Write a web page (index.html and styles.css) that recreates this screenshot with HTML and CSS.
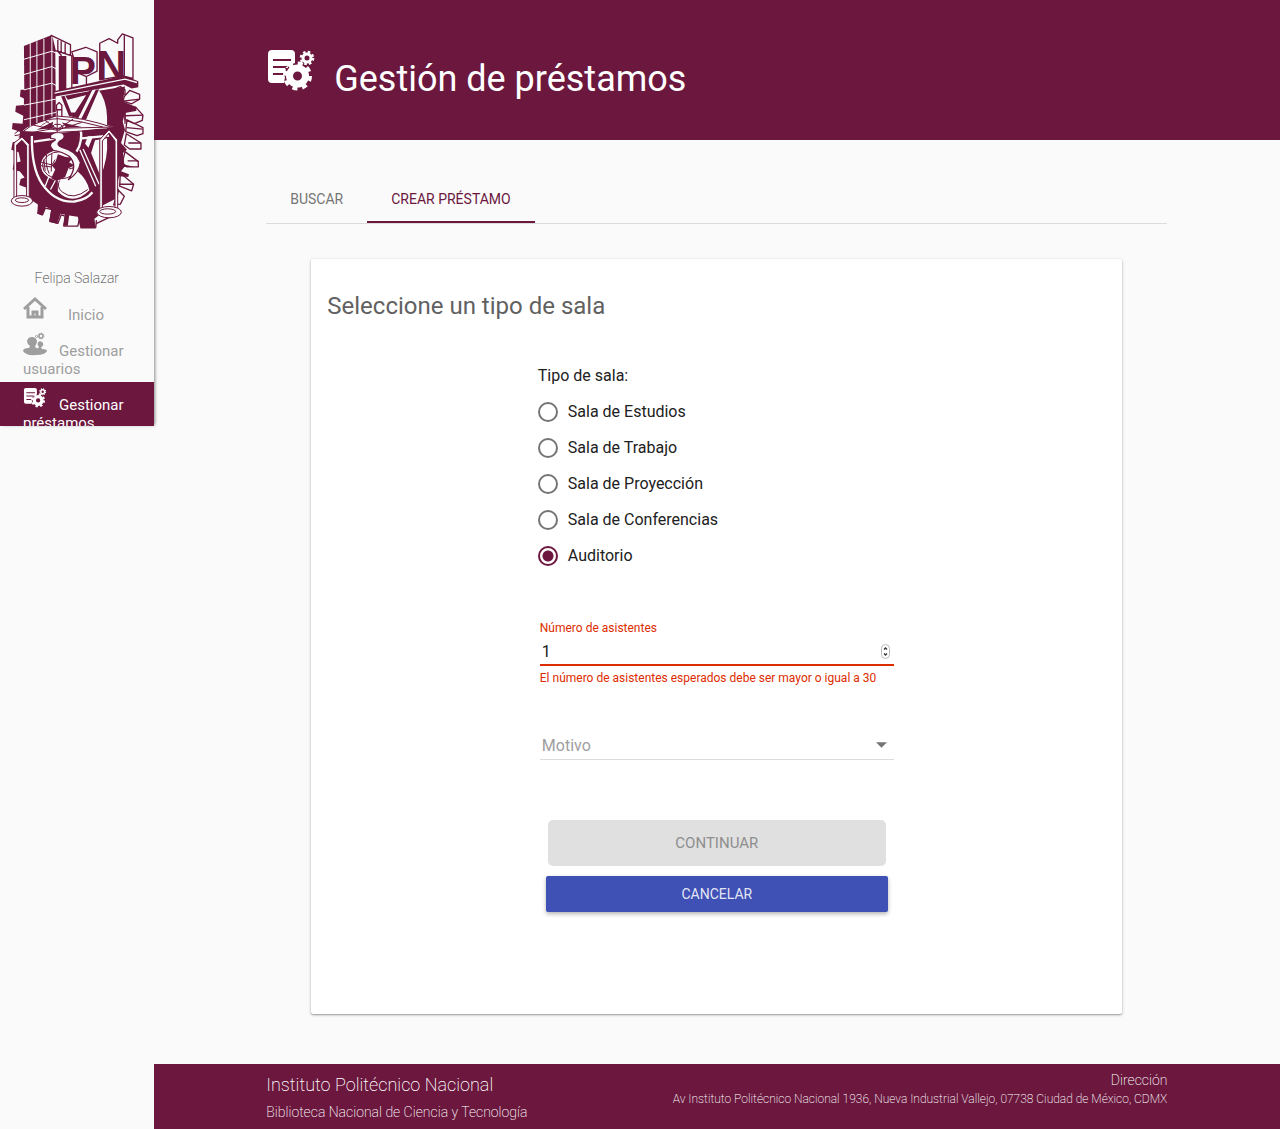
FILE: index.html
```html
<!DOCTYPE html>
<html lang="es">
<head>
<meta charset="utf-8">
<meta name="viewport" content="width=device-width, initial-scale=1">
<title>Gestión de préstamos</title>
<link rel="stylesheet" href="styles.css">
</head>
<body>
<svg class="defs" width="0" height="0" aria-hidden="true">
  <defs>
    <symbol id="loans" viewBox="-2 0 50 42">
      <path fill-rule="evenodd" fill="currentColor" d="M4 0H23Q27 0 27 4V13L20 16L17 18L18 20L15 24L17 27L16 33H4Q0 33 0 29V4Q0 0 4 0ZM5 9H23V11H5ZM5 16H20V18H5ZM5 23H16V25H5Z"/>
      <g fill="none" stroke="currentColor">
        <circle cx="29.500" cy="26" r="8" stroke-width="7"/>
        <circle cx="29.500" cy="26" r="12.500" stroke-width="4" stroke-dasharray="5 4.800"/>
        <circle cx="39" cy="8" r="4" stroke-width="3"/>
        <circle cx="39" cy="8" r="6.200" stroke-width="2.200" stroke-dasharray="2.600 2.270"/>
      </g>
    </symbol>
  </defs>
</svg>
<div class="shell">
  <aside class="sidebar">
    <svg class="logo" viewBox="-24 -30 462 660" role="img" aria-label="Escudo del IPN">
      <!-- gear teeth in relief -->
      <g class="face">
        <path d="M320 178L338 170L352 180V192L338 196ZM350 200L366 182L396 194V208L372 222L346 214ZM352 236L384 232L406 256L404 272L380 282L352 270ZM358 270L406 294V312L388 318L354 306ZM356 312L400 340V358H366L350 346ZM352 366L392 396V412H358L344 400ZM338 430L378 464L372 484L336 470ZM332 482L350 500L338 524L318 526ZM316 540L332 552L300 566L262 584"/>
        <path d="M346 214L396 208M352 258L406 256M358 294L404 298M362 340H400M360 394H392M336 464H378M352 250V282M384 232V244"/>
        <path d="M88 550L104 556L112 536L132 540L126 576L150 582L160 556L172 560L168 590H210L216 564L222 594H264L266 572"/>
      </g>
      <path class="ink" d="M48 180H38L36 200L48 206V226L24 228L22 246L46 258L44 282L14 280L12 298L36 306L34 334L14 338L10 360L32 368L38 396L18 400L14 420L36 426L50 444L38 448L34 466L60 476V505L90 525L88 552L102 558L114 532L130 540L124 577L148 583L158 553L172 556L166 589H180L184 558L210 562L218 597H264L260 568L284 550L280 530L330 505L334 480L326 474L334 440L362 442L364 434L340 425L350 412H380L350 405L346 370L358 360L340 340L352 300L345 275L352 250L384 244L386 232L346 215L352 170L278 182L200 190L170 280L130 255Z"/>
      <!-- monument support -->
      <path class="paper" d="M138 196L270 176Q296 208 298 262V300L150 290L134 250Z"/>
      <path class="ink" d="M244 182L254 180L206 276H184ZM264 180L274 178L232 276H216ZM160 200L170 198L190 248H208L200 260H184ZM172 198L244 184L242 194L180 210Z"/>
      <path class="paper-line" d="M256 182L212 274"/>
      <path class="face" d="M146 226L154 218L162 226V240H146ZM148 240H162V264H148Z"/>
      <!-- shield interior -->
      <path class="ink" d="M70 316L140 300L310 296L326 480L270 540L110 526L72 440Z"/>
      <path class="paper" d="M262 332L298 326Q302 390 278 440L250 370ZM240 320H256L242 354L232 342ZM150 450L210 426Q238 450 245 482Q195 532 150 486Z"/>
      <path class="ink" d="M188 270Q220 284 221 316Q221 340 208 360L192 348Q206 310 176 282Z"/>
      <g class="paper-line thick">
        <path d="M72 318Q70 414 102 462Q142 520 200 516Q238 510 254 488M196 270Q226 290 219 332Q216 352 206 366M222 326L304 318M78 336L146 326"/>
      </g>
      <g class="paper-line"><path d="M216 360L264 470M226 358L274 464M126 434L112 470M146 446L128 480"/></g>
      <path class="line" d="M158 448Q142 472 164 488Q196 514 240 480"/>
      <!-- globe and flask -->
      <ellipse class="paper" cx="157" cy="407" rx="58" ry="46"/>
      <g class="line">
        <ellipse cx="157" cy="407" rx="53" ry="41"/>
        <path d="M100 398L132 406L142 390M98 408L130 412M116 374Q112 408 124 432M132 372L130 426M108 390L112 424M202 378L196 418M210 390L204 422M190 408L216 398M184 418L214 410"/>
      </g>
      <path class="ink" d="M150 374L174 382L196 384L184 398L200 408L182 416L172 442L146 454L130 446L142 420L132 408L144 394Z"/>
      <path class="face" d="M128 316Q142 304 164 310Q178 324 156 334Q142 346 164 354Q206 364 218 398Q214 430 182 450Q212 408 184 380Q164 366 136 362Q118 346 138 334Q150 328 128 326Z"/>
      <!-- dome and balance beam -->
      <path class="paper" d="M44 304Q94 258 148 258Q232 264 318 292L158 310Z"/>
      <path class="ink" d="M86 300L136 276L132 296ZM162 278L222 292L176 294ZM106 282L134 268L94 292Z"/>
      <g class="line">
        <path d="M20 312Q82 258 148 259Q222 262 318 294M42 308Q92 266 150 267Q218 272 286 292M20 318L140 296L318 292M32 322L146 308L302 300M148 260V310M148 298L106 268M150 298L196 268M152 300L222 278M148 302L76 286M132 292L140 284H158L166 292L154 302Z"/>
      </g>
      <!-- scales -->
      <g class="face fine">
        <path d="M18 504V340L42 322L64 344V504H56V348L42 332L26 346V504ZM276 540V330L304 300L330 330V540H322V334L304 310L284 334V540Z"/>
        <ellipse cx="42" cy="514" rx="32" ry="16"/><ellipse cx="42" cy="512" rx="20" ry="7"/>
        <ellipse cx="304" cy="548" rx="37" ry="17"/><ellipse cx="300" cy="546" rx="24" ry="8"/>
      </g>
      <!-- tower -->
      <path class="ink" d="M48 48L130 16L142 30L144 260L50 296Z"/>
      <path class="face" d="M130 16L188 44V76L142 62L134 28ZM150 30V64M160 34V68M172 40V72"/>
      <path class="tower-grid" d="M67 40V290M87 34V280M108 26V272M132 20V260M48 88L132 64L146 70M48 134L132 110L146 118M48 180L132 160L146 168M48 226L144 208M48 270L144 248"/>
      <!-- monument lettering -->
      <g class="face">
        <path d="M150 64L192 78V176L160 184V76ZM236 140V164M192 66L234 52L268 66V124L236 140L212 130ZM276 40L304 26L330 40V30L344 12L376 24V146L344 138L276 150Z"/>
        <path d="M350 16V138"/>
      </g>
      <g class="letters"><text x="142" y="186" font-size="158">I</text><text x="186" y="162" font-size="118">P</text><text x="266" y="146" font-size="124">N</text></g>
      <path class="ink" d="M138 184L350 137L392 154V172L372 176L348 164L142 200Z"/>
      <path class="paper-line" d="M140 190L352 148L388 158"/>
    </svg>
    <p class="user">Felipa Salazar</p>
    <nav class="menu">
      <a href="#inicio"><svg class="icon icon-home" viewBox="0 0 24 24" aria-hidden="true"><path d="M1 13L12 3L23 13M5 11V21H19V11M10 21V16H14V21" fill="none" stroke="currentColor" stroke-width="3"/></svg>Inicio</a>
      <a href="#usuarios"><svg class="icon" viewBox="0 0 24 24" aria-hidden="true"><path fill="currentColor" d="M0 19Q0 16 6 16L7 14Q4 12 4 9Q5 5 9 5Q13 5 14 9Q14 12 12 14L13 16Q15 17 16 15Q14 13 15 10Q18 8 20 11Q21 14 18 15L19 17Q24 17 24 19Q22 23 13 23Q3 24 0 19Z"/><g fill="none" stroke="currentColor"><circle cx="18" cy="4" r="2" stroke-width="1.500"/><circle cx="18" cy="4" r="3" stroke-width="1" stroke-dasharray="1 1"/><circle cx="13.500" cy="4.500" r="1"/></g></svg>Gestionar usuarios</a>
      <a class="active" href="#prestamos"><svg class="icon" aria-hidden="true"><use href="#loans"/></svg>Gestionar préstamos</a>
    </nav>
  </aside>
  <div class="main">
    <header class="banner">
      <svg class="banner-icon" aria-hidden="true"><use href="#loans"/></svg>
      <h1>Gestión de préstamos</h1>
    </header>
    <main class="content">
      <nav class="tabs">
        <a href="#buscar">BUSCAR</a>
        <a class="selected" href="#crear">CREAR PRÉSTAMO</a>
      </nav>
      <section class="card">
        <h2>Seleccione un tipo de sala</h2>
        <form class="form">
          <fieldset class="rooms">
            <legend>Tipo de sala:</legend>
            <label><input type="radio" name="sala">Sala de Estudios</label>
            <label><input type="radio" name="sala">Sala de Trabajo</label>
            <label><input type="radio" name="sala">Sala de Proyección</label>
            <label><input type="radio" name="sala">Sala de Conferencias</label>
            <label><input type="radio" name="sala" checked>Auditorio</label>
          </fieldset>
          <div class="field invalid">
            <label for="asistentes">Número de asistentes</label>
            <div class="control">
              <input id="asistentes" type="number" value="1" aria-describedby="error">
              <svg class="stepper" viewBox="0 0 9 15" aria-hidden="true"><rect x=".5" y=".5" width="8" height="14" rx="4" fill="#fff" stroke="#bbb"/><path d="M3 5.500L4.500 4L6 5.500M3 9.500L4.500 11L6 9.500" fill="none" stroke="#333" stroke-width="1.300"/></svg>
            </div>
            <p id="error">El número de asistentes esperados debe ser mayor o igual a 30</p>
          </div>
          <div class="field">
            <div class="control">
              <select aria-label="Motivo"><option>Motivo</option></select>
              <svg class="arrow" viewBox="0 0 12 6" aria-hidden="true"><path d="M0 0H12L6 6Z" fill="#757575"/></svg>
            </div>
          </div>
          <div class="actions">
            <button class="continue" type="submit" disabled>CONTINUAR</button>
            <button class="cancel" type="button">CANCELAR</button>
          </div>
        </form>
      </section>
    </main>
    <footer class="footer">
      <div><p class="institute">Instituto Politécnico Nacional</p><p class="library">Biblioteca Nacional de Ciencia y Tecnología</p></div>
      <address><p class="place">Dirección</p><p class="street">Av Instituto Politécnico Nacional 1936, Nueva Industrial Vallejo, 07738 Ciudad de México, CDMX</p></address>
    </footer>
  </div>
</div>
</body>
</html>
```
FILE: styles.css
```css
:root { --wine: #6b173e; --error: #dd2c00; }
* { box-sizing: border-box; }
body { margin: 0; background: #fafafa; color: #212121; font: 16px/20px Roboto, sans-serif; }
h1, h2, p { margin: 0; font-weight: 400; }
a { text-decoration: none; }
.defs { position: absolute; }
.shell { display: grid; grid-template-columns: 12% minmax(0, 1fr); align-items: start; }

.sidebar { max-height: 426px; overflow: hidden; padding-top: 20px; background: #fafafa; box-shadow: 2px 0 3px -1px rgba(0, 0, 0, .45); }
.logo { display: block; width: 100%; }
.logo .ink { fill: var(--wine); }
.logo .paper { fill: #fafafa; }
.logo .line { fill: none; stroke: var(--wine); stroke-width: 3; }
.logo .face { fill: #fafafa; stroke: var(--wine); stroke-width: 4; stroke-linejoin: round; }
.logo .fine { stroke-width: 3; }
.logo .paper-line { fill: none; stroke: #fafafa; stroke-width: 4; }
.logo .thick { stroke-width: 7; }
.logo .tower-grid { fill: none; stroke: #fafafa; stroke-width: 3; }
.logo .letters { fill: var(--wine); font-family: "Liberation Sans", sans-serif; font-weight: 700; }
.user { margin: 29px 0 4px; color: #424242; text-align: center; font-size: 14px; font-weight: 200; }
.menu a { display: block; padding: 4px 23px; color: #9e9e9e; font-size: 15px; line-height: 18px; }
.menu .active { background: var(--wine); color: #fff; }
.icon { width: 24px; height: 24px; margin-right: 12px; vertical-align: baseline; }
.icon-home { margin-right: 21px; }

.banner { display: flex; align-items: flex-start; gap: 18px; height: 140px; padding: 50px 10% 0; background: var(--wine); color: #fff; }
.banner-icon { width: 50px; height: 42px; }
.banner h1 { font-size: 36px; line-height: 58px; }
.content { padding: 36px 10% 50px; }
.tabs { display: flex; height: 48px; border-bottom: 1px solid #dcdcdc; font-size: 14px; }
.tabs a { padding: 13px 24px; color: #757575; }
.tabs .selected { border-bottom: 2px solid var(--wine); color: var(--wine); }
.card { width: 90%; min-height: 755px; margin: 35px auto 0; padding: 30px 16px; border-radius: 2px; background: #fff; box-shadow: 0 1px 3px rgba(0, 0, 0, .3), 0 1px 1px rgba(0, 0, 0, .14); }
.card h2 { color: #616161; font-size: 24px; line-height: 35px; }
.form { width: 100%; max-width: 358px; margin: 42px auto 0; }
.rooms { display: grid; gap: 16px; margin: 0; padding: 0; border: 0; }
.rooms legend { padding: 0; margin-bottom: 16px; }
.rooms label { display: flex; align-items: center; gap: 10px; }
.rooms input { appearance: none; width: 20px; height: 20px; margin: 0; border: 2px solid #757575; border-radius: 50%; }
.rooms input:checked { border-color: var(--wine); background: radial-gradient(circle, var(--wine) 5px, transparent 6px); }
.field { margin: 54px 2px 0; font-size: 12px; line-height: 16px; }
.control { position: relative; }
.control input, .control select { display: block; width: 100%; height: 30px; padding: 4px 2px 2px; border: 0; border-bottom: 1px solid #dcdcdc; border-radius: 0; outline: 0; appearance: none; background: transparent; color: #9e9e9e; font: 16px/20px Roboto, sans-serif; }
.invalid { color: var(--error); }
.invalid .control input { border-bottom: 2px solid var(--error); color: #212121; appearance: textfield; }
.invalid p { padding-top: 4px; }
.field + .field { margin-top: 44px; }
.stepper { position: absolute; right: 4px; top: 8px; width: 9px; height: 15px; }
.arrow { position: absolute; right: 7px; top: 12px; width: 11px; height: 6px; }
.actions { display: grid; gap: 10px; margin: 60px 8px 0; }
.actions button { border: 0; font: 14px/20px Roboto, sans-serif; }
.actions .continue { height: 46px; margin: 0 2px; border-radius: 5px; background: #e0e0e0; color: #8e8e8e; font-size: 15px; }
.actions .cancel { height: 36px; border-radius: 2px; background: #3f51b5; color: rgba(255, 255, 255, .87); box-shadow: 0 2px 4px rgba(0, 0, 0, .3); }
.footer { display: flex; justify-content: space-between; min-height: 65px; padding: 6px 10% 0; background: var(--wine); color: #fff; }
.footer p { font-weight: 200; }
.footer address { font-style: normal; text-align: right; }
.institute { font-size: 18px; line-height: 30px; }
.library { font-size: 14px; line-height: 24px; }
.place { font-size: 14px; }
.street { font-size: 12px; line-height: 18px; }
```
